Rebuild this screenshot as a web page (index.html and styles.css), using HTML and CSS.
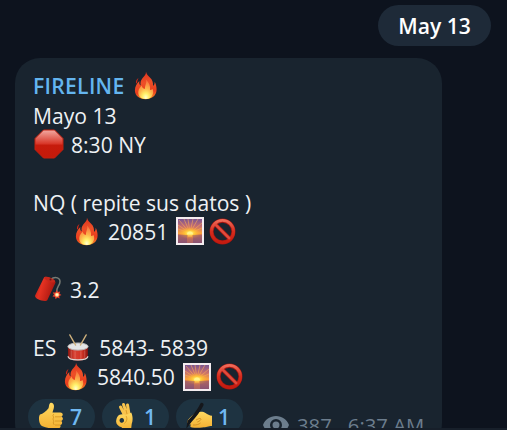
FILE: index.html
```
<!DOCTYPE html>
<html lang="es">
<head>
<meta charset="utf-8">
<title>FIRELINE</title>
<link rel="stylesheet" href="styles.css">
</head>
<body>
<svg class="defs" aria-hidden="true">
  <defs>
    <linearGradient id="flame" x1=".4" x2=".5" y2="1"><stop offset="0" stop-color="#df321d"/><stop offset=".4" stop-color="#ee5028"/><stop offset=".75" stop-color="#e93c1d"/><stop offset="1" stop-color="#f58a25"/></linearGradient>
    <radialGradient id="core" cx=".5" cy=".92" r=".85"><stop offset="0" stop-color="#ffffd0"/><stop offset=".25" stop-color="#fff069"/><stop offset=".55" stop-color="#fdb44a"/><stop offset="1" stop-color="#f67540"/></radialGradient>
    <linearGradient id="stop" x2="0" y2="1"><stop offset="0" stop-color="#f2aaa2"/><stop offset=".48" stop-color="#d9392b"/><stop offset=".55" stop-color="#c61b0c"/><stop offset="1" stop-color="#c41a0a"/></linearGradient>
    <linearGradient id="sky" x2="0" y2="1"><stop offset="0" stop-color="#795593"/><stop offset=".3" stop-color="#c46c70"/><stop offset=".6" stop-color="#f9a33c"/><stop offset=".65" stop-color="#cf7450"/><stop offset="1" stop-color="#855075"/></linearGradient>
    <radialGradient id="sun"><stop offset="0" stop-color="#fffb91"/><stop offset=".4" stop-color="#ffc837"/><stop offset="1" stop-color="#ff9b30" stop-opacity="0"/></radialGradient>
    <linearGradient id="ring" x2="0" y2="1"><stop offset="0" stop-color="#ef6a58"/><stop offset=".5" stop-color="#d62c1d"/><stop offset="1" stop-color="#c41b10"/></linearGradient>
    <linearGradient id="tube" x2="1" y2=".35"><stop offset="0" stop-color="#a51510"/><stop offset=".4" stop-color="#e63222"/><stop offset="1" stop-color="#a81710"/></linearGradient>
    <linearGradient id="drum"><stop offset="0" stop-color="#8e1710"/><stop offset=".3" stop-color="#d84132"/><stop offset=".7" stop-color="#d13325"/><stop offset="1" stop-color="#8c140f"/></linearGradient>
    <linearGradient id="skin" x2="0" y2="1"><stop offset="0" stop-color="#ffda61"/><stop offset="1" stop-color="#f5b133"/></linearGradient>
    <symbol id="i-fire" viewBox="0 0 28 30" preserveAspectRatio="none">
      <path fill="url(#flame)" d="M14.500.8c.3 3-1.900 4.500-3.700 6.800C9 10 8.500 12 9 15c-1.400-.7-1.700-2.400-1.400-4.600C5.300 12.700 3 16 3 20c0 6 4.700 9.200 11 9.200S25.300 26 25.500 19.500c.1-3-.6-6.100-2-8.500.1 2-.4 3.400-1.700 4.300.3-3.800-.8-6.300-3-8.400-2.200-2.100-3.600-3.500-4.300-6.100Z"/>
      <path fill="#cf2819" d="M6.700 7.200C4.300 8.900 3.500 11 4.400 13.300 5.800 12.200 5 10.400 6.700 7.200Z"/>
      <path fill="url(#core)" d="M14.700 9c.8 3-1.300 5.700-1.400 9.500-1.900-.3-3-1.700-3.300-3.500C7 18 6 21 6.700 24c1 3.500 3.700 5 7.400 5 4.100 0 7.200-2.300 7.800-6.300.3-1.800-.1-3.200-.7-4.200-.6.8-1.500 1.200-2.500 1.200.6-4.500-1.300-7.900-4-10.700Z"/>
    </symbol>
    <symbol id="i-stop" viewBox="0 0 30 30"><path fill="url(#stop)" stroke="#c2200f" d="M9.500 1h11L29 9.500v11L20.500 29h-11L1 20.500v-11Z"/></symbol>
    <symbol id="i-sunrise" viewBox="0 0 28 28">
      <path fill="#f4edf0" d="M0 0h28v28H0z"/><path fill="url(#sky)" d="M2 2h24v24H2z"/>
      <path stroke="#f9ac55" stroke-width=".8" opacity=".75" d="M14 16 3 3M14 16 8 2M14 16 12 2M14 16l3-14M14 16l8-14M14 16 26 6M14 16l12-5M14 16 2 8M14 16 2 12"/>
      <ellipse cx="14" cy="16" rx="12" ry="6" fill="url(#sun)"/><path fill="#fff58b" d="M11 17.500a3 3 0 0 1 6 0Z"/>
      <path fill="#8d5572" opacity=".5" d="M2 18h9v8H2zM17 18h9v8h-9z"/><path fill="#d97c55" opacity=".45" d="M11 18h6v8h-6z"/><path fill="#ffc24c" d="M12 18h4v1.500h-4z"/>
    </symbol>
    <symbol id="i-ban" viewBox="0 0 28 28"><circle cx="14" cy="14" r="11.300" fill="none" stroke="#a71610" stroke-width="4.200"/><path stroke="#b91c12" stroke-width="4" d="m6.300 6.300 15.400 15.400"/><circle cx="14" cy="14" r="11.500" fill="none" stroke="url(#ring)" stroke-width="3"/><path stroke="#df4c3e" stroke-width="2.400" d="m6.300 6.300 15.400 15.400"/></symbol>
    <symbol id="i-dynamite" viewBox="0 0 28 28">
      <path d="M16.500 4.500c5-4 10.500-1.500 9.300 3.500-.7 3-3.500 4.500-3 9" fill="none" stroke="#777b75" stroke-width="1.500"/>
      <path fill="url(#tube)" d="M10 2.500c.8-2.400 12.300 2 11.500 5.200L13.400 25c-1.200 2.900-13.400-.7-12.300-4.400Z"/>
      <ellipse cx="15.700" cy="4.600" rx="5.800" ry="2" transform="rotate(22 15.700 4.600)" fill="#c7271b"/><circle cx="16.500" cy="4.500" r="1" fill="#55231e"/>
      <path fill="#ee412c" d="m22.700 15 1 2.100 2.500-.7-.8 2.300 2.100 1.300-2.300 1 .4 2.500-2.300-1-1.700 1.700-.6-2.400-2.500-.2 1.500-2-1.200-2.200 2.600.2Z"/><circle cx="23" cy="19.700" r="2" fill="#ffd58d"/><circle cx="23" cy="19.700" r="1" fill="#fffbd5"/>
    </symbol>
    <symbol id="i-drum" viewBox="0 0 28 30">
      <path fill="url(#drum)" d="M2.500 14h20.500v10c0 6-20.500 6-20.500 0Z" transform="translate(1.200)"/><path fill="none" stroke="#ddd6d1" stroke-width="1.300" d="M3.700 24c0 5 20.500 5 20.500 0"/>
      <path stroke="#e69b90" stroke-width=".4" d="M7 18v8M11 19v8M17 19v8M21 18v8"/>
      <ellipse cx="14" cy="14" rx="10.500" ry="3.700" fill="#e4e5e5" stroke="#b8b8b7"/>
      <path stroke="#ceb07c" stroke-width="1.400" stroke-linecap="round" d="m5.500 2 6 10.500M22.500 2l-6 10.500"/>
    </symbol>
    <symbol id="i-thumb" viewBox="0 0 26 28">
      <path fill="url(#skin)" d="M2 12.500c3-.6 6-3.200 8.500-6.300.6-1.500.4-3.900 1.500-4.900 1.500-1.300 4 0 4 2.800 0 2.700-1 4.700-1.500 6.400h7.800c2.900 0 3.200 3.300 1 4.100 2.300.9 1.900 4-.1 4.300 1.600 1.100 1.100 3.700-1 4 1 1.500 0 3.300-1.900 3.300-6.400.2-11.500.2-15.800-1.900C1 23 0 15 2 12.500Z"/>
      <path fill="none" stroke="#d39120" stroke-width=".8" d="M17 14.800h6M17 19h6M17 23h5M16 12c-1.500 1-1.500 2.500 0 3-1.300 1-1.300 3 0 4-1 1-1 3 .5 4"/>
    </symbol>
    <symbol id="i-ok" viewBox="0 0 20 28">
      <path fill="none" stroke="#f9c44d" stroke-width="3" stroke-linecap="round" d="M10 14 5.500 5M12 13 8.500 2.500M14.500 15 12.500 3"/>
      <path fill="url(#skin)" fill-rule="evenodd" d="M4 13c2.500-1.400 5.500-1 7 .5l5.200-3c1.800 4 1.800 8 .5 11.500L16 28H8l-1.300-2.700C3 24.200.6 21.500 1.200 18.500 1.500 16 2.500 14 4 13Zm3 3c-1.900-.2-3 2-2.200 3.500.8 1.700 3 1.700 3.900.2.800-1.600-.1-3.500-1.700-3.700Z"/>
      <path fill="none" stroke="#d2901e" stroke-width=".8" d="M11 14c1.500 2 1 5.500-1.600 7.500M12 12l-1-4"/>
    </symbol>
    <symbol id="i-write" viewBox="0 0 28 28">
      <path fill="url(#skin)" d="M3 18c2-2.500 5-6 8.500-7.500 3-1.200 7-1.200 9 .5 2 1.400 4 2.500 6.500 2.700V24c-4 0-5.500 1.200-10 1.500-3.500.3-7 .2-10 0-2.200-.2-2.200-1.900-.7-2.700C3.500 22.500 1 20.700 3 18Z"/>
      <path fill="none" stroke="#d18e20" stroke-width=".9" d="M11 18c2-.8 2.500-1.500 4.300-1.500 1.700.5 0 2.500-3 3.500M8 23c3 .2 6-.5 7.500-2"/>
      <path fill="none" stroke="#15171b" stroke-width="3.600" stroke-linecap="round" d="M16.800 2.700C14 8.500 10 13.500 4.500 19.500"/><path fill="#15171b" d="M2.700 18 6 20.500 1.200 27Z"/>
    </symbol>
    <symbol id="i-eye" viewBox="0 0 26 18"><path fill="#6c7d8d" fill-rule="evenodd" d="M0 9C2 3.500 7 0 13 0s11 3.500 13 9c-2 5.500-7 9-13 9S2 14.500 0 9Zm13-6a6 6 0 1 0 0 12 6 6 0 0 0 0-12Zm0 2.500a3.500 3.500 0 1 1 0 7 3.500 3.500 0 0 1 0-7Z"/></symbol>
  </defs>
</svg>
<main class="chat">
  <div class="date">May 13</div>
  <article class="message">
    <div class="line sender"><span>FIRELINE</span><svg class="fire name-fire"><use href="#i-fire"/></svg></div>
    <div class="line">Mayo 13</div>
    <div class="line"><svg class="stop"><use href="#i-stop"/></svg><span>8:30 NY</span></div>
    <div class="line"></div>
    <div class="line">NQ ( repite sus datos )</div>
    <div class="line indent-wide"><svg class="fire"><use href="#i-fire"/></svg><span>20851</span><svg class="pic"><use href="#i-sunrise"/></svg><svg class="ban"><use href="#i-ban"/></svg></div>
    <div class="line"></div>
    <div class="line"><svg class="dynamite"><use href="#i-dynamite"/></svg><span>3.2</span></div>
    <div class="line"></div>
    <div class="line"><span>ES</span><svg class="drum"><use href="#i-drum"/></svg><span>5843- 5839</span></div>
    <div class="line indent"><svg class="fire"><use href="#i-fire"/></svg><span>5840.50</span><svg class="pic"><use href="#i-sunrise"/></svg><svg class="ban"><use href="#i-ban"/></svg></div>
    <footer class="footer">
      <div class="chip"><svg class="thumb"><use href="#i-thumb"/></svg><span>7</span></div>
      <div class="chip"><svg class="ok"><use href="#i-ok"/></svg><span>1</span></div>
      <div class="chip"><svg class="write"><use href="#i-write"/></svg><span>1</span></div>
      <div class="meta"><svg class="eye"><use href="#i-eye"/></svg><span class="views">387</span><span>6:37 AM</span></div>
    </footer>
  </article>
</main>
<div class="bottom-bar"></div>
</body>
</html>
```
FILE: styles.css
```
* { box-sizing: border-box; }
body {
  margin: 0;
  width: 507px;
  height: 430px;
  overflow: hidden;
  background: #0d131e;
  color: #eef1f4;
  font: 21.1px/29px "Open Sans", "Noto Sans", sans-serif;
}
svg { display: block; flex: none; }
.defs { position: absolute; width: 0; height: 0; }
.chat { height: 428px; overflow: hidden; padding: 5px 16px 0 15px; }
.date {
  width: 113px;
  height: 41px;
  margin-left: auto;
  border-radius: 21px;
  background: #1e2a38;
  color: #fff;
  font-weight: 600;
  line-height: 41px;
  text-align: center;
}
.message {
  width: 427px;
  height: 390px;
  margin-top: 12px;
  padding: 13.400px 12px 0 18px;
  border-radius: 25px;
  background: #19242f;
}
.line { display: flex; align-items: center; height: 29.080px; white-space: pre; }
.sender { color: #64b5ef; font-weight: 600; }
.sender span { width: 92px; letter-spacing: .3px; }
.fire { width: 27px; height: 29px; margin-right: 8px; }
.name-fire { margin-left: 7px; }
.stop { width: 30px; height: 30px; margin: 0 7px 0 1px; }
.indent-wide { padding-left: 40px; }
.indent { padding-left: 29px; }
.pic { width: 28px; height: 28px; margin: 0 5px 0 8px; }
.ban { width: 27px; height: 27px; }
.dynamite { width: 28px; height: 28px; margin: 0 8px 0 1px; }
.drum { width: 28px; height: 29px; margin: 0 7px 0 8px; }
.footer { display: flex; gap: 7px; margin: 7.700px 0 0 -5px; }
.chip {
  display: flex;
  align-items: center;
  justify-content: space-between;
  width: 67px;
  height: 35px;
  padding: 0 13px 0 10px;
  border-radius: 18px;
  background: #1e3341;
  color: #70b9f2;
  font-weight: 600;
}
.thumb { width: 26px; height: 28px; }
.ok { width: 20px; height: 28px; margin-left: 3px; }
.write { width: 28px; height: 28px; margin-left: -1px; }
.meta {
  display: flex;
  align-items: center;
  height: 29px;
  margin: 12px 0 0 13px;
  color: #6c7d8d;
  font-size: 20.300px;
  white-space: nowrap;
}
.eye { width: 26px; height: 18px; margin: 0 8px 0 0; }
.views { margin-right: 16px; }
.bottom-bar { height: 2px; background: #171f2a; }
```
